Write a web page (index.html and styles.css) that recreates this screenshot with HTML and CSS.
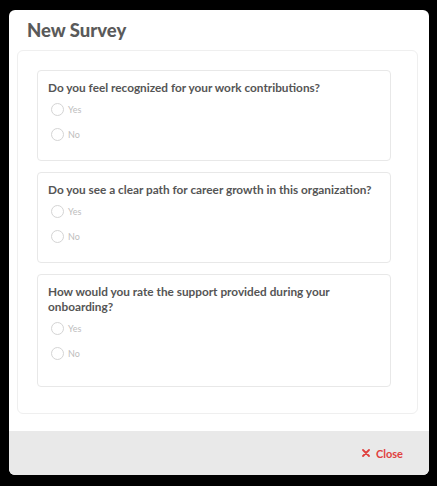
FILE: index.html
```html
<!DOCTYPE html>
<html lang="en">
<head>
    <meta charset="UTF-8">
    <title>New Survey</title>
    <link rel="stylesheet" href="styles.css">
</head>
<body>
    <div class="modal">
        <div class="modal-header">
            <h1>New Survey</h1>
        </div>
        <div class="modal-body">
            <div class="question">
                <p class="question-text">Do you feel recognized for your work contributions?</p>
                <label class="option"><span class="radio"></span>Yes</label>
                <label class="option"><span class="radio"></span>No</label>
            </div>
            <div class="question">
                <p class="question-text">Do you see a clear path for career growth in this organization?</p>
                <label class="option"><span class="radio"></span>Yes</label>
                <label class="option"><span class="radio"></span>No</label>
            </div>
            <div class="question">
                <p class="question-text">How would you rate the support provided during your onboarding?</p>
                <label class="option"><span class="radio"></span>Yes</label>
                <label class="option"><span class="radio"></span>No</label>
            </div>
        </div>
        <div class="modal-footer">
            <button class="close-btn">
                <svg width="8" height="8" viewBox="0 0 8 8"><path d="M1 1L7 7M7 1L1 7" stroke="#e0413f" stroke-width="1.8" stroke-linecap="round"/></svg>
                Close
            </button>
        </div>
    </div>
</body>
</html>
```

FILE: styles.css
```css
body {
    margin: 0;
    background-color: #000;
    font-family: Lato, "Liberation Sans", sans-serif;
}
.modal {
    width: 420px;
    height: 465px;
    margin: 10px 0 0 9px;
    background-color: #fff;
    border-radius: 6px;
    overflow: hidden;
    display: flex;
    flex-direction: column;
}
.modal-header {
    height: 40px;
    display: flex;
    align-items: center;
    padding-left: 18px;
}
h1 {
    margin: 0;
    font-size: 18.5px;
    font-weight: 900;
    color: #5a5a5a;
}
.modal-body {
    height: 364px;
    box-sizing: border-box;
    margin: 0 11px 0 8px;
    padding: 19px 26px 0 19px;
    border: 1px solid #efefef;
    border-radius: 6px;
}
.question {
    border: 1px solid #e8e8e8;
    border-radius: 4px;
    padding: 9px 10px 13px 10px;
    margin-bottom: 11px;
}
.question:last-child {
    padding-bottom: 20px;
}
.question-text {
    margin: 0 0 2px 0;
    font-size: 11.8px;
    line-height: 15px;
    font-weight: bold;
    color: #555;
}
.option {
    height: 25px;
    display: flex;
    align-items: center;
    font-size: 9px;
    color: #bdbdbd;
}
.radio {
    width: 11px;
    height: 11px;
    border: 1px solid #d4d4d4;
    border-radius: 50%;
    margin: 0 4px 0 3px;
}
.modal-footer {
    margin-top: 17px;
    height: 44px;
    background-color: #e9e9e9;
    display: flex;
    align-items: center;
    justify-content: flex-end;
    padding-right: 26px;
}
.close-btn {
    background: none;
    border: none;
    padding: 0;
    display: flex;
    align-items: center;
    gap: 6px;
    font-family: Lato, "Liberation Sans", sans-serif;
    font-size: 11px;
    font-weight: bold;
    color: #e0413f;
    cursor: pointer;
}
```
